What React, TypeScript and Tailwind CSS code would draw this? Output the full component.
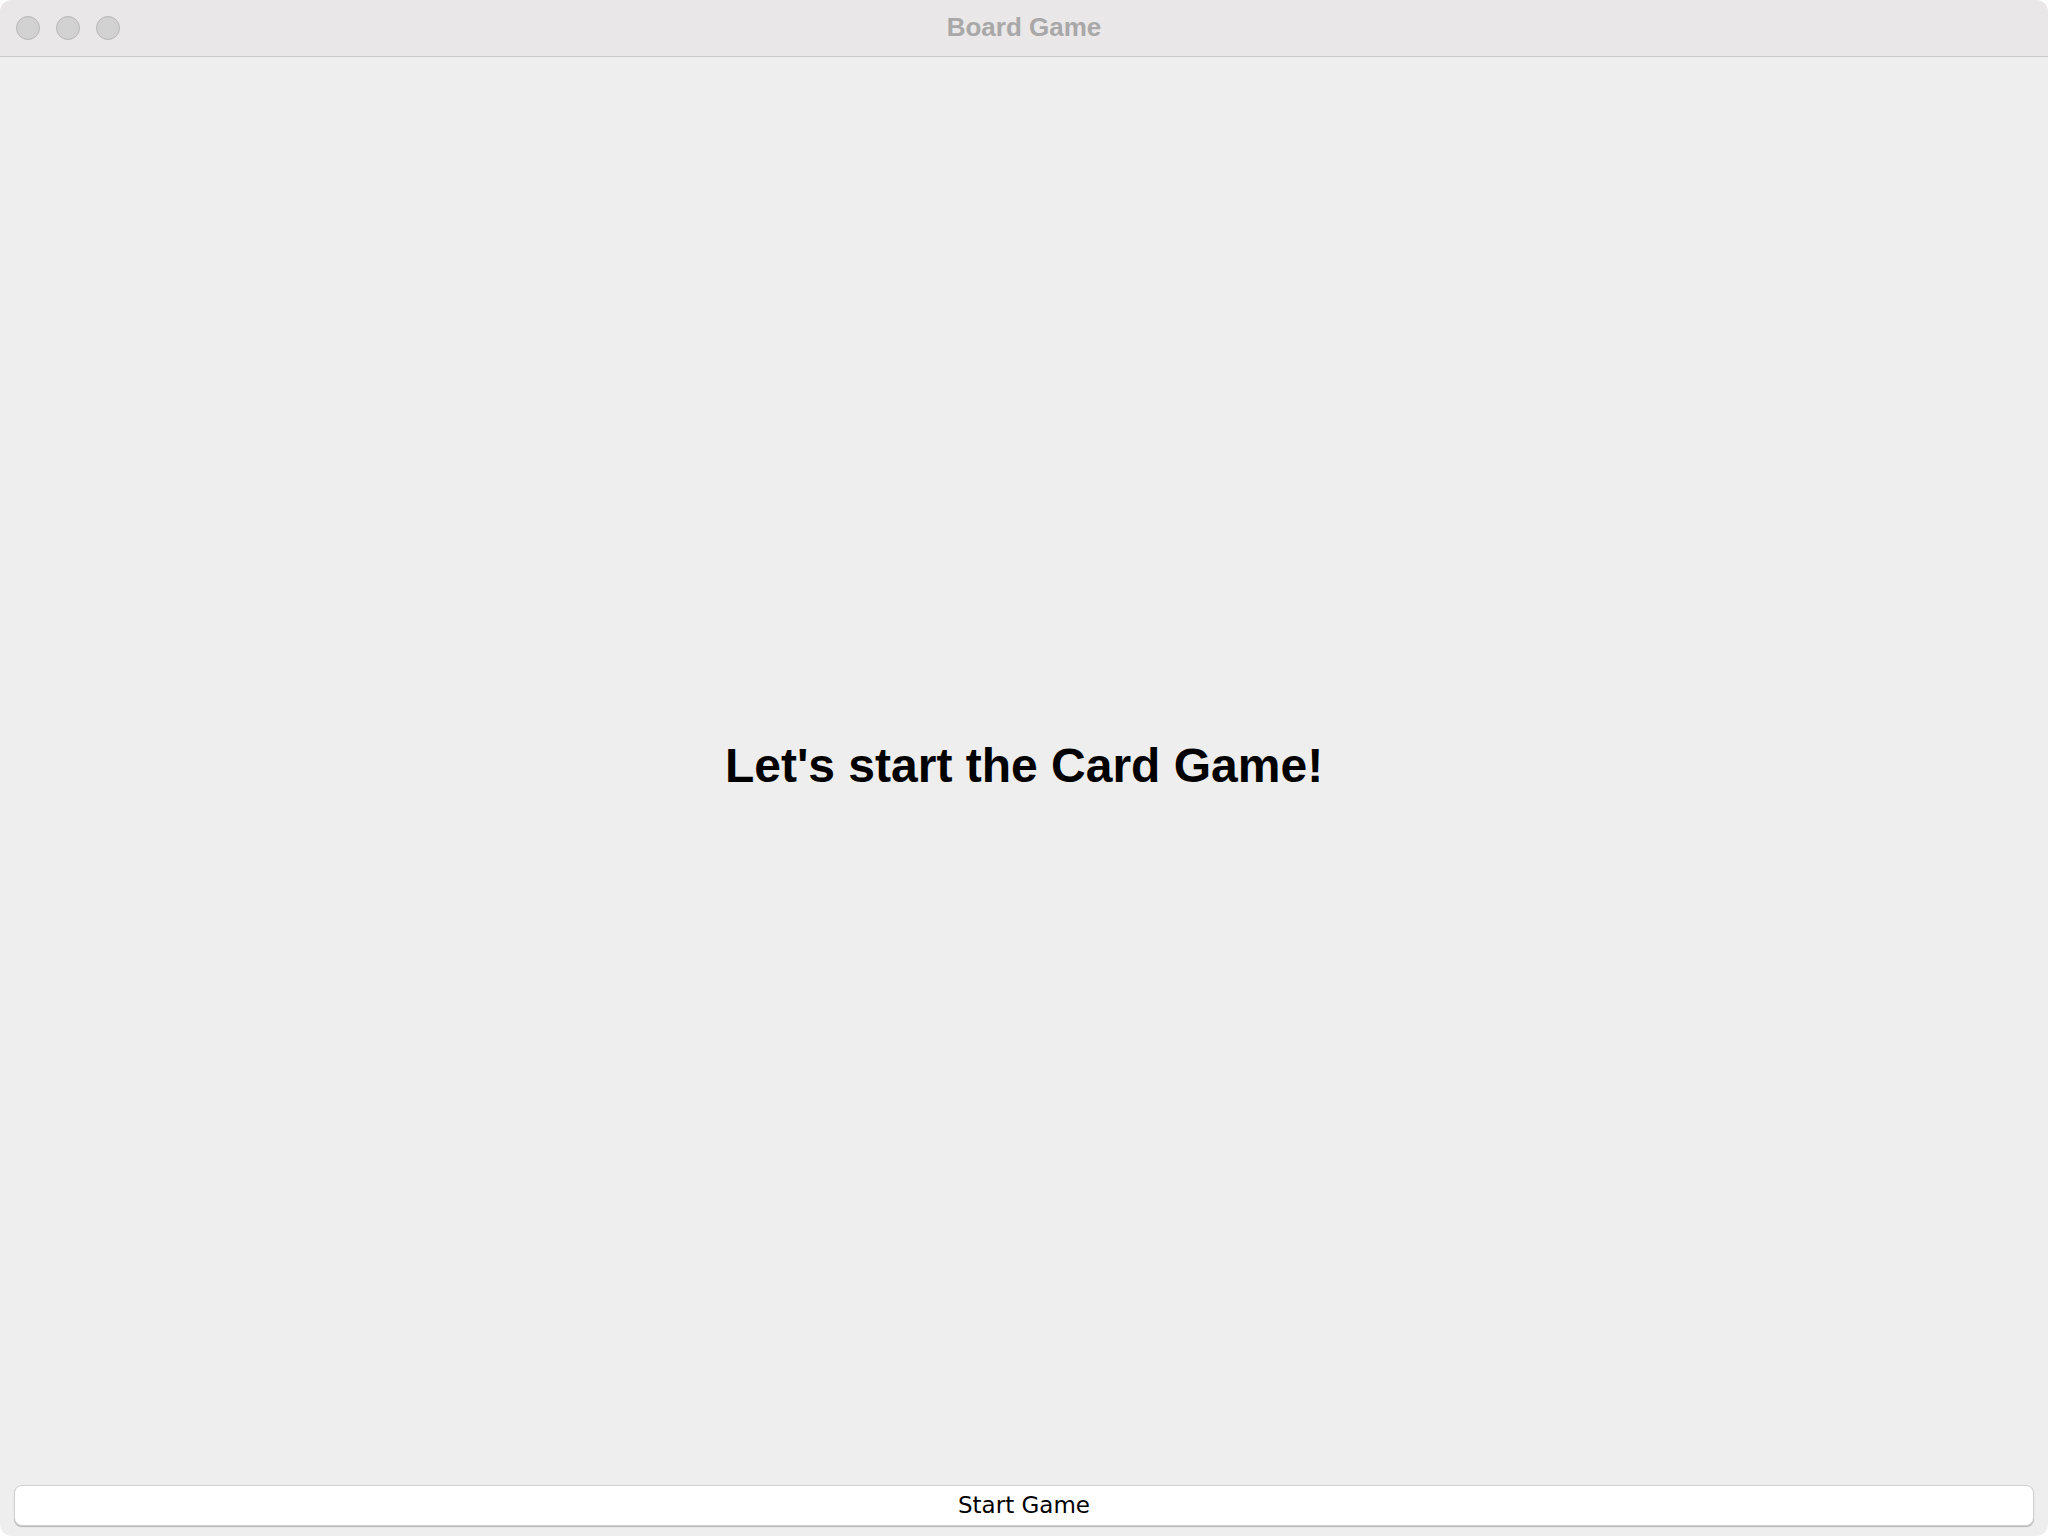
export default function App() {
  return (
    <div className="w-[2048px] h-[1536px] bg-white">
      <div className="w-full h-full rounded-[12px] overflow-hidden flex flex-col bg-[#eeeeee]">
        <div className="relative h-[57px] shrink-0 bg-[#e9e7e8] border-b border-[#cbcacb] flex items-center justify-center">
          <div className="absolute left-[16px] top-[16px] flex gap-[16px]">
            <div className="w-[24px] h-[24px] rounded-full bg-[#d3d2d3] border border-[#b9b8b9]" />
            <div className="w-[24px] h-[24px] rounded-full bg-[#d3d2d3] border border-[#b9b8b9]" />
            <div className="w-[24px] h-[24px] rounded-full bg-[#d3d2d3] border border-[#b9b8b9]" />
          </div>
          <span className="text-[26px] font-bold text-[#a9a8a9] leading-none -mt-[2px]" style={{ fontFamily: '"Liberation Sans", Arial, sans-serif' }}>
            Board Game
          </span>
        </div>
        <div className="flex-1 flex items-center justify-center pb-[10px]">
          <h1 className="text-[48px] font-bold text-black" style={{ fontFamily: '"Liberation Sans", Arial, sans-serif' }}>
            Let's start the Card Game!
          </h1>
        </div>
        <div className="px-[14px] pb-[10px] shrink-0">
          <button className="w-full h-[41px] bg-white rounded-[8px] border border-[#d0d0d0] shadow-[0_1px_1px_rgba(0,0,0,0.25)] text-[23px] text-black flex items-center justify-center" style={{ fontFamily: '"DejaVu Sans", sans-serif' }}>
            Start Game
          </button>
        </div>
      </div>
    </div>
  );
}
